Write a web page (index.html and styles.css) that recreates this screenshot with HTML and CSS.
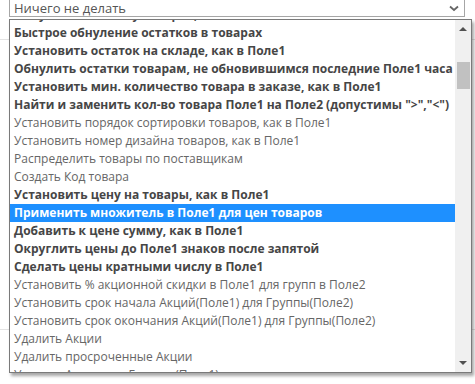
FILE: index.html
```html
<!DOCTYPE html>
<html lang="ru">
<head>
  <meta charset="UTF-8" />
  <meta name="viewport" content="width=device-width, initial-scale=1.0"/>
  <title>Действие с товарами</title>
  <link rel="stylesheet" href="styles.css">
</head>
<body>
  <div class="page">
    <div class="field">
      <div class="select">
        <span>Ничего не делать</span>
        <svg class="chevron" width="10" height="7" viewBox="0 0 10 7">
          <path d="M1 1.5 L5 5 L9 1.5" fill="none" stroke="#666" stroke-width="1.8"/>
        </svg>
      </div>

      <div class="listbox">
        <ul class="options">
          <li class="strong">Обнулить остатки у товаров, как в Поле1</li>
          <li class="strong">Быстрое обнуление остатков в товарах</li>
          <li class="strong">Установить остаток на складе, как в Поле1</li>
          <li class="strong">Обнулить остатки товарам, не обновившимся последние Поле1 часа</li>
          <li class="strong">Установить мин. количество товара в заказе, как в Поле1</li>
          <li class="strong">Найти и заменить кол-во товара Поле1 на Поле2 (допустимы "&gt;","&lt;")</li>
          <li>Установить порядок сортировки товаров, как в Поле1</li>
          <li>Установить номер дизайна товаров, как в Поле1</li>
          <li>Распределить товары по поставщикам</li>
          <li>Создать Код товара</li>
          <li class="strong">Установить цену на товары, как в Поле1</li>
          <li class="strong selected">Применить множитель в Поле1 для цен товаров</li>
          <li class="strong">Добавить к цене сумму, как в Поле1</li>
          <li class="strong">Округлить цены до Поле1 знаков после запятой</li>
          <li class="strong">Сделать цены кратными числу в Поле1</li>
          <li>Установить % акционной скидки в Поле1 для групп в Поле2</li>
          <li>Установить срок начала Акций(Поле1) для Группы(Поле2)</li>
          <li>Установить срок окончания Акций(Поле1) для Группы(Поле2)</li>
          <li>Удалить Акции</li>
          <li>Удалить просроченные Акции</li>
          <li>Удалить Акции для Группы (Поле1)</li>
        </ul>
        <div class="scrollbar">
          <span class="arrow up"></span>
          <div class="track"><div class="thumb"></div></div>
          <span class="arrow down"></span>
        </div>
      </div>
    </div>

    <div class="row first"></div>
    <div class="row second"></div>
  </div>
</body>
</html>
```

FILE: styles.css
```css
* {
  box-sizing: border-box;
}

html, body {
  height: 100%;
}

body {
  margin: 0;
  background: #fff;
  font-family: 'Open Sans', 'Noto Sans', sans-serif;
  font-size: 12px;
  color: #555;
}

.page {
  min-height: 384px;
  padding: 0 10px 0 9px;
  overflow: hidden;
}

.field {
  position: relative;
  margin-top: -6px;
}

.select {
  height: 23px;
  border: 1px solid #a6a6a6;
  display: flex;
  align-items: center;
  justify-content: space-between;
  padding: 5px 5px 0 4px;
  color: #555;
  font-size: 13px;
}

.chevron {
  display: block;
}

.listbox {
  position: absolute;
  top: 25px;
  left: 0;
  width: 463px;
  height: 354px;
  border: 1px solid #7a7a7a;
  background: #fff;
  box-shadow: 2px 3px 3px rgba(0, 0, 0, 0.35);
  display: flex;
  overflow: hidden;
  z-index: 5;
}

.options {
  list-style: none;
  margin: -14px 0 0 0;
  padding: 0;
  flex: 1;
  min-width: 0;
  overflow: hidden;
}

.options li {
  height: 18px;
  line-height: 18px;
  padding-left: 4px;
  white-space: nowrap;
  color: #666;
}

.options li.strong {
  font-weight: bold;
  color: #464646;
}

.options li.selected {
  background: #1e90ff;
  color: #fff;
}

.scrollbar {
  width: 16px;
  flex: none;
  background: #f0f0f0;
  display: flex;
  flex-direction: column;
  align-items: center;
}

.arrow {
  width: 0;
  height: 0;
  border-left: 4px solid transparent;
  border-right: 4px solid transparent;
  margin: 7px 0;
}

.arrow.up {
  border-bottom: 4px solid #505050;
}

.arrow.down {
  border-top: 4px solid #505050;
}

.track {
  flex: 1;
  width: 100%;
  display: flex;
  justify-content: center;
}

.thumb {
  width: 13px;
  height: 27px;
  margin-top: 24px;
  background: #c1c1c1;
}

.row {
  border-top: 1px solid #e3e3e3;
  margin: 0 -10px 0 -9px;
}

.row.first {
  margin-top: 22px;
}

.row.second {
  margin-top: 289px;
}
```
